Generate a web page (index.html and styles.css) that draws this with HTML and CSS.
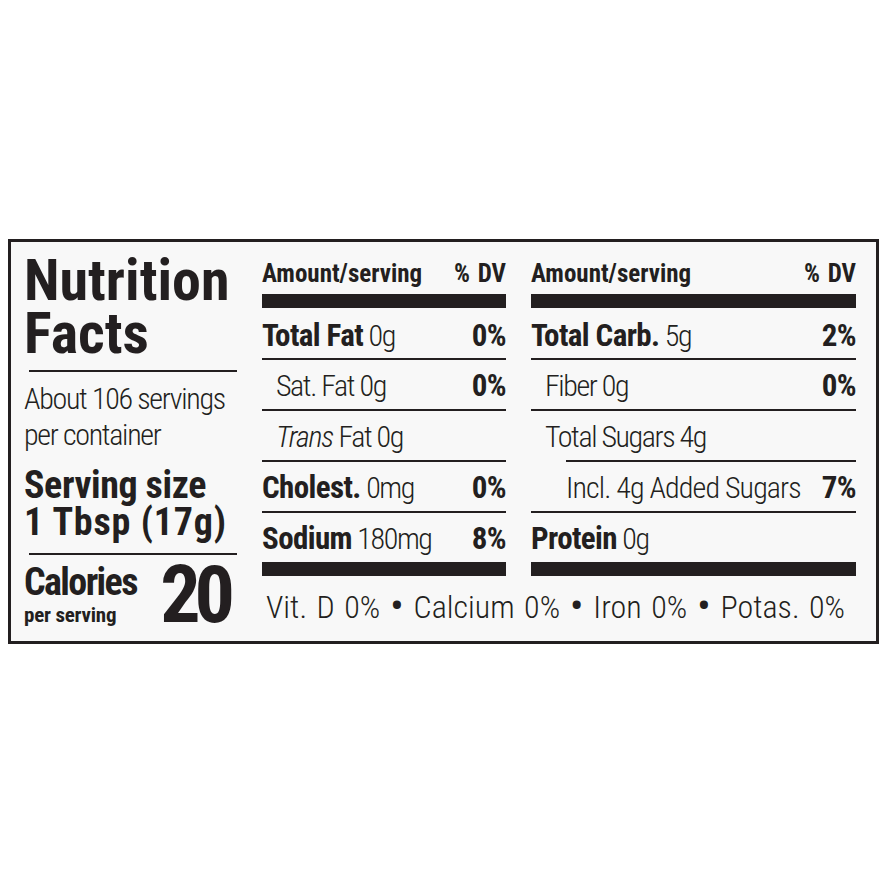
FILE: index.html
```html
<!DOCTYPE html>
<html lang="en">
<head>
<meta charset="utf-8">
<title>Nutrition Facts</title>
<link rel="stylesheet" href="styles.css">
</head>
<body>
<div class="panel">
  <div class="title-col">
    <h1 class="title">Nutrition<br>Facts</h1>
    <div class="servings">About 106 servings<br>per container</div>
    <div class="serving-size">Serving size<br><span class="size-amt">1 Tbsp (17g)</span></div>
    <div class="calories">
      <div class="cal-label">
        <div class="cal-word">Calories</div>
        <div class="cal-per">per serving</div>
      </div>
      <div class="cal-num">20</div>
    </div>
  </div>

  <div class="table">
    <div class="head"><span>Amount/serving</span><span class="dv-head">% DV</span></div>
    <div class="row first"><span><b>Total Fat</b> 0g</span><b class="dv">0%</b></div>
    <div class="row ind"><span>Sat. Fat 0g</span><b class="dv">0%</b></div>
    <div class="row ind"><span><i>Trans</i> Fat 0g</span></div>
    <div class="row"><span><b>Cholest.</b> 0mg</span><b class="dv">0%</b></div>
    <div class="row last"><span><b>Sodium</b> 180mg</span><b class="dv">8%</b></div>
  </div>

  <div class="table">
    <div class="head"><span>Amount/serving</span><span class="dv-head">% DV</span></div>
    <div class="row first"><span><b>Total Carb.</b> 5g</span><b class="dv">2%</b></div>
    <div class="row ind"><span>Fiber 0g</span><b class="dv">0%</b></div>
    <div class="row ind short-line"><span>Total Sugars 4g</span></div>
    <div class="row ind2"><span class="added">Incl. 4g Added Sugars</span><b class="dv">7%</b></div>
    <div class="row last"><span><b>Protein</b> 0g</span></div>
  </div>

  <div class="vitamins">Vit. D 0% <span class="dot">•</span> Calcium 0% <span class="dot">•</span> Iron 0% <span class="dot">•</span> Potas. 0%</div>
</div>
</body>
</html>
```

FILE: styles.css
```css
html, body {
  margin: 0;
  padding: 0;
  background: #ffffff;
}

body {
  width: 884px;
  height: 884px;
  overflow: hidden;
  color: #231f20;
  font-family: "Liberation Sans Narrow", "Roboto Condensed", "DejaVu Sans Condensed", "Liberation Sans", sans-serif;
}

.panel {
  margin: 239px 0 0 8px;
  width: 871px;
  height: 405px;
  box-sizing: border-box;
  border: 3px solid #231f20;
  background: #f8f8f8;
  padding-left: 13px;
  display: grid;
  grid-template-columns: 213px 244px 325px;
  grid-template-rows: auto 1fr;
  column-gap: 25px;
}

/* ---------- left column ---------- */
.title-col {
  grid-row: 1 / 3;
  grid-column: 1;
  white-space: nowrap;
}

.title {
  margin: 0;
  padding: 12px 0 12px 0;
  font-size: 58px;
  line-height: 53px;
  font-weight: 700;
  background: linear-gradient(#231f20, #231f20) no-repeat 5px 100% / calc(100% - 5px) 2px;
}

.servings {
  margin-top: 9px;
  font-size: 30px;
  line-height: 36px;
  font-weight: 300;
  letter-spacing: -1.3px;
}

.serving-size {
  margin-top: 14px;
  padding-bottom: 14px;
  font-size: 38px;
  line-height: 37px;
  font-weight: 700;
  letter-spacing: -0.4px;
  background: linear-gradient(#231f20, #231f20) no-repeat 5px 100% / calc(100% - 5px) 2px;
}

.size-amt { letter-spacing: 0.8px; }

.calories {
  display: flex;
  justify-content: space-between;
  align-items: flex-start;
}

.cal-label {
  margin-top: 8px;
  font-weight: 700;
}

.cal-word {
  font-size: 38px;
  line-height: 38px;
  letter-spacing: -1.6px;
}

.cal-per {
  font-size: 21px;
  line-height: 28px;
  letter-spacing: -0.2px;
}

.cal-num {
  margin-top: 5px;
  margin-right: 8px;
  font-size: 80px;
  line-height: 70px;
  font-weight: 700;
  letter-spacing: -6px;
}

/* ---------- tables ---------- */
.table {
  display: flex;
  flex-direction: column;
  white-space: nowrap;
}

.head {
  display: flex;
  justify-content: space-between;
  padding-top: 19px;
  padding-bottom: 8px;
  font-size: 25px;
  line-height: 25px;
  font-weight: 700;
  border-bottom: 14px solid #231f20;
}

.dv-head { word-spacing: 2px; }

.row {
  display: flex;
  justify-content: space-between;
  align-items: baseline;
  box-sizing: border-box;
  height: 51px;
  padding-top: 11px;
  border-bottom: 2px solid #231f20;
  font-size: 30px;
  line-height: 30px;
  font-weight: 300;
  letter-spacing: -1.4px;
}

.row.first {
  height: 52px;
  padding-top: 13px;
}

.row b {
  font-weight: 700;
  font-size: 31px;
  letter-spacing: -0.6px;
}

.row i { letter-spacing: -1.2px; }

.row .added { letter-spacing: -0.9px; }

.row.ind { padding-left: 14px; }
.row.ind2 { padding-left: 35px; }

.row.short-line {
  border-bottom: none;
  background: linear-gradient(#231f20, #231f20) no-repeat 35px 100% / calc(100% - 35px) 2px;
}

.row.last {
  height: 63px;
  border-bottom: 14px solid #231f20;
}

.vitamins {
  grid-column: 2 / 4;
  padding-left: 4px;
  padding-top: 16px;
  font-size: 32px;
  line-height: 30px;
  font-weight: 300;
  word-spacing: 2.3px;
  white-space: nowrap;
}

.dot {
  font-size: 44px;
  line-height: 0;
  vertical-align: -3px;
}
```
